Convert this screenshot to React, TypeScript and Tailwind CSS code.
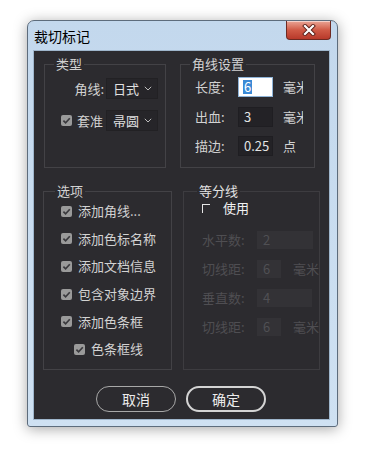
import React from "react";

const cjk = "font-['Noto_Sans_CJK_SC','Noto_Sans',sans-serif]";

function Check({ className = "" }: { className?: string }) {
  return (
    <span className={`flex h-[11px] w-[11px] shrink-0 items-center justify-center rounded-[2px] bg-[#9a9a9a] ${className}`}>
      <svg viewBox="0 0 11 11" className="h-[11px] w-[11px]">
        <path d="M2.4 5.6 L4.6 7.8 L8.8 3.2" fill="none" stroke="#3a393d" strokeWidth="1.7" />
      </svg>
    </span>
  );
}

function Select({ value }: { value: string }) {
  return (
    <div className="flex h-[21px] w-[52px] shrink-0 items-center justify-between border border-[#222124] bg-[#262529] pl-[6px] pr-[5px] text-[#e0e0e0]">
      <span>{value}</span>
      <svg viewBox="0 0 8 5" className="h-[5px] w-[8px]">
        <path d="M0.8 0.8 L4 4 L7.2 0.8" fill="none" stroke="#bdbdbd" strokeWidth="1" />
      </svg>
    </div>
  );
}

function Field({ value, selected = false }: { value: string; selected?: boolean }) {
  if (selected) {
    return (
      <div className="flex h-[20px] w-[35px] items-center border border-[#8fb4d8] bg-white pl-[4px]">
        <span className="bg-[#3b8ad6] px-[1px] leading-[14px] text-white">{value}</span>
      </div>
    );
  }
  return (
    <div className="flex h-[20px] w-[35px] items-center border border-[#1f1e22] bg-[#232226] pl-[5px] text-[#e4e4e4]">
      {value}
    </div>
  );
}

function Dim({ value, w }: { value: string; w: string }) {
  return (
    <div className={`flex h-[18px] items-center bg-[#333236] pl-[6px] text-[#505054] ${w}`}>{value}</div>
  );
}

const options = ["添加角线...", "添加色标名称", "添加文档信息", "包含对象边界", "添加色条框"];

export default function App() {
  return (
    <div className={`h-[456px] w-[368px] bg-white pl-[27px] pt-[20px] text-[13px] leading-[16px] ${cjk}`}>
      <div className="flex h-[407px] w-[311px] flex-col rounded-t-[7px] rounded-b-[3px] border border-[#5d6c7c] bg-gradient-to-b from-[#c3d8ed] to-[#cfe1f2] shadow-[0_2px_14px_rgba(0,0,0,0.35)]">
        {/* title bar */}
        <div className="flex h-[29px] shrink-0 items-start justify-between pl-[6px] pr-[6px]">
          <span className="mt-[7px] text-[14px] leading-[16px] text-black">裁切标记</span>
          <div className="flex h-[19px] w-[45px] items-center justify-center rounded-b-[4px] border border-t-0 border-[#6e2a22] bg-gradient-to-b from-[#e9a596] via-[#d05a46] to-[#b8392a] shadow-[inset_0_1px_0_rgba(255,255,255,0.5)]">
            <svg viewBox="0 0 14 12" className="h-[12px] w-[14px]">
              <path d="M3 2 L11 10 M11 2 L3 10" stroke="#5a1f18" strokeWidth="4" strokeLinecap="square" />
              <path d="M3 2 L11 10 M11 2 L3 10" stroke="#ffffff" strokeWidth="2.2" strokeLinecap="square" />
            </svg>
          </div>
        </div>

        {/* body */}
        <div className="flex flex-1 flex-col pb-[6px] pl-[5px] pr-[7px]">
          <div className="flex flex-1 flex-col border border-[#9fb6cc] bg-[#2c2b2f] pt-[5px] text-[#d2d2d2]">
            {/* top row */}
            <div className="flex gap-[14px] pl-[10px]">
              <fieldset className="h-[112px] w-[122px] min-w-0 border border-[#434246]">
                <legend className="ml-[9px] px-[2px]">类型</legend>
                <div className="mt-[6px] flex flex-col gap-[11px] pr-[7px]">
                  <div className="flex items-center justify-end gap-[2px]">
                    <span className="whitespace-nowrap">角线:</span>
                    <Select value="日式" />
                  </div>
                  <div className="flex items-center justify-end">
                    <Check />
                    <span className="ml-[5px] mr-[3px] whitespace-nowrap">套准</span>
                    <Select value="帚圆" />
                  </div>
                </div>
              </fieldset>

              <fieldset className="h-[112px] w-[135px] min-w-0 border border-[#434246]">
                <legend className="ml-[9px] px-[2px]">角线设置</legend>
                <div className="mt-[5px] flex flex-col gap-[9.5px] pl-[14px]">
                  <div className="flex items-center">
                    <span className="w-[43px]">长度:</span>
                    <Field value="6" selected />
                    <span className="ml-[10px] w-[20px] overflow-hidden whitespace-nowrap">毫米</span>
                  </div>
                  <div className="flex items-center">
                    <span className="w-[43px]">出血:</span>
                    <Field value="3" />
                    <span className="ml-[10px] w-[20px] overflow-hidden whitespace-nowrap">毫米</span>
                  </div>
                  <div className="flex items-center">
                    <span className="w-[43px]">描边:</span>
                    <Field value="0.25" />
                    <span className="ml-[10px]">点</span>
                  </div>
                </div>
              </fieldset>
            </div>

            {/* lower row */}
            <div className="mt-[15px] flex gap-[11px] pl-[9px]">
              <fieldset className="h-[187px] w-[129px] min-w-0 border border-[#434246]">
                <legend className="ml-[11px] px-[2px]">选项</legend>
                <div className="mt-[4px] flex flex-col gap-[11.7px] pl-[17px]">
                  {options.map((o) => (
                    <div key={o} className="flex h-[16px] items-center">
                      <Check />
                      <span className="ml-[6px] whitespace-nowrap">{o}</span>
                    </div>
                  ))}
                  <div className="flex h-[16px] items-center pl-[13px]">
                    <Check />
                    <span className="ml-[6px]">色条框线</span>
                  </div>
                </div>
              </fieldset>

              <fieldset className="h-[187px] w-[137px] min-w-0 border border-[#3d3c40]">
                <legend className="ml-[13px] px-[2px] text-[#e2e2e2]">等分线</legend>
                <div className="mt-[1px] flex flex-col pl-[18px]">
                  <div className="flex h-[16px] items-center">
                    <span className="h-[9px] w-[8px] border-l-[1.5px] border-t-[1.5px] border-[#e6e6e6]" />
                    <span className="ml-[13px] text-[#f2f2f2]">使用</span>
                  </div>
                  <div className="mt-[15px] flex flex-col gap-[11px] text-[#4f4e52]">
                    <div className="flex h-[18px] items-center">
                      <span className="w-[55px]">水平数:</span>
                      <Dim value="2" w="w-[56px]" />
                    </div>
                    <div className="flex h-[18px] items-center">
                      <span className="w-[55px]">切线距:</span>
                      <Dim value="6" w="w-[24px]" />
                      <span className="ml-[12px]">毫米</span>
                    </div>
                    <div className="flex h-[18px] items-center">
                      <span className="w-[55px]">垂直数:</span>
                      <Dim value="4" w="w-[55px]" />
                    </div>
                    <div className="flex h-[18px] items-center">
                      <span className="w-[55px]">切线距:</span>
                      <Dim value="6" w="w-[24px]" />
                      <span className="ml-[12px]">毫米</span>
                    </div>
                  </div>
                </div>
              </fieldset>
            </div>

            {/* buttons */}
            <div className="mt-[16px] flex justify-center gap-[10px] pr-[1px] text-[14px] text-[#ececec]">
              <button className="h-[26px] w-[80px] rounded-full border-[1.5px] border-[#a8a8a8]">取消</button>
              <button className="h-[26px] w-[80px] rounded-full border-2 border-[#d4d4d4]">确定</button>
            </div>
          </div>
        </div>
      </div>
    </div>
  );
}
